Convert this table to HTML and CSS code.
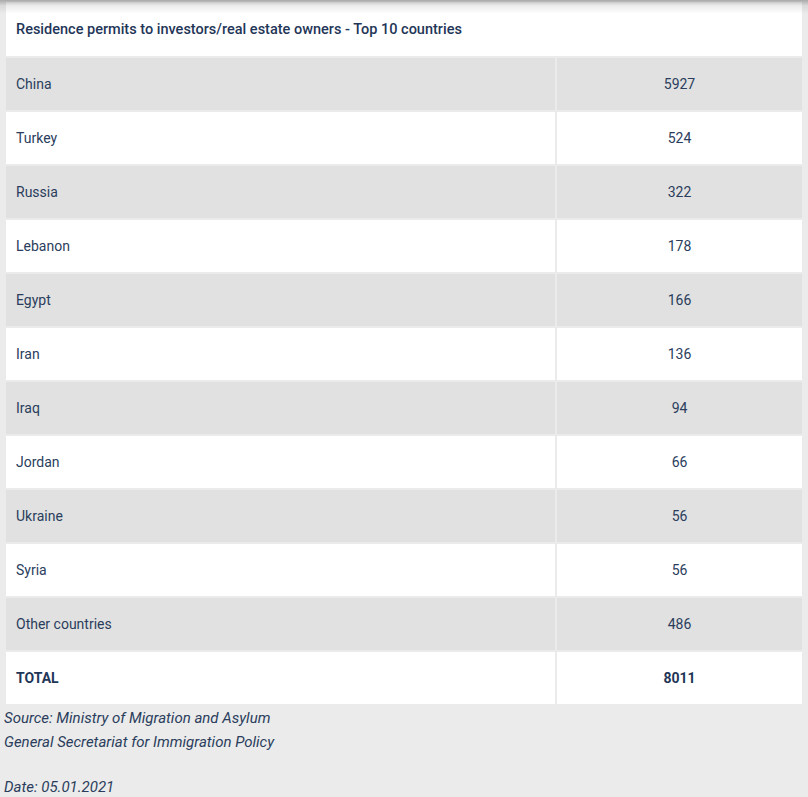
FILE: index.html
```html
<!DOCTYPE html>
<html>
<head>
<meta charset="utf-8">
<link rel="stylesheet" href="styles.css">
</head>
<body>
<div class="shade"></div>
<div class="wrap">
<table class="permits">
  <colgroup><col class="col-country"><col class="col-num"></colgroup>
  <tr class="head"><th colspan="2">Residence permits to investors/real estate owners - Top 10 countries</th></tr>
  <tr class="odd"><td class="c">China</td><td class="n">5927</td></tr>
  <tr class="even"><td class="c">Turkey</td><td class="n">524</td></tr>
  <tr class="odd"><td class="c">Russia</td><td class="n">322</td></tr>
  <tr class="even"><td class="c">Lebanon</td><td class="n">178</td></tr>
  <tr class="odd"><td class="c">Egypt</td><td class="n">166</td></tr>
  <tr class="even"><td class="c">Iran</td><td class="n">136</td></tr>
  <tr class="odd"><td class="c">Iraq</td><td class="n">94</td></tr>
  <tr class="even"><td class="c">Jordan</td><td class="n">66</td></tr>
  <tr class="odd"><td class="c">Ukraine</td><td class="n">56</td></tr>
  <tr class="even"><td class="c">Syria</td><td class="n">56</td></tr>
  <tr class="odd"><td class="c">Other countries</td><td class="n">486</td></tr>
  <tr class="even total"><td class="c">TOTAL</td><td class="n">8011</td></tr>
</table>
<div class="notes">
  <p>Source: Ministry of Migration and Asylum</p>
  <p>General Secretariat for Immigration Policy</p>
  <p class="blank">&nbsp;</p>
  <p>Date: 05.01.2021</p>
</div>
</div>
</body>
</html>
```
FILE: styles.css
```css
html, body {
  margin: 0;
  padding: 0;
  background: #ebebeb;
}
body {
  font-family: Roboto, "Liberation Sans", sans-serif;
  color: #2a3d5c;
  width: 808px;
  height: 797px;
  overflow: hidden;
  position: relative;
}
.shade {
  position: absolute;
  left: 0;
  top: 0;
  width: 808px;
  height: 14px;
  background: linear-gradient(to bottom, rgba(0,0,0,0.28), rgba(0,0,0,0.08) 40%, rgba(0,0,0,0));
  pointer-events: none;
}
.wrap {
  padding: 0 6px 0 4px;
}
.permits {
  border-collapse: separate;
  border-spacing: 2px;
  width: 800px;
  table-layout: fixed;
}
.col-country {
  width: 549px;
}
.col-num {
  width: 245px;
}
.permits th {
  background: #ffffff;
  height: 54px;
  padding: 0 0 0 10px;
  text-align: left;
  font-weight: 500;
  font-size: 14.5px;
  color: #1f3658;
  vertical-align: middle;
}
.permits td {
  height: 52px;
  padding: 0;
  font-size: 14px;
  vertical-align: middle;
}
.permits td.c {
  padding-left: 10px;
}
.permits td.n {
  text-align: center;
}
.odd td {
  background: #e1e1e1;
}
.even td {
  background: #ffffff;
}
.total td {
  font-weight: 700;
  color: #1f3658;
}
.notes p {
  margin: 0;
  font-style: italic;
  font-size: 15px;
  line-height: 24px;
  color: #2a3d5c;
}
.notes p.blank {
  height: 21px;
}
```
